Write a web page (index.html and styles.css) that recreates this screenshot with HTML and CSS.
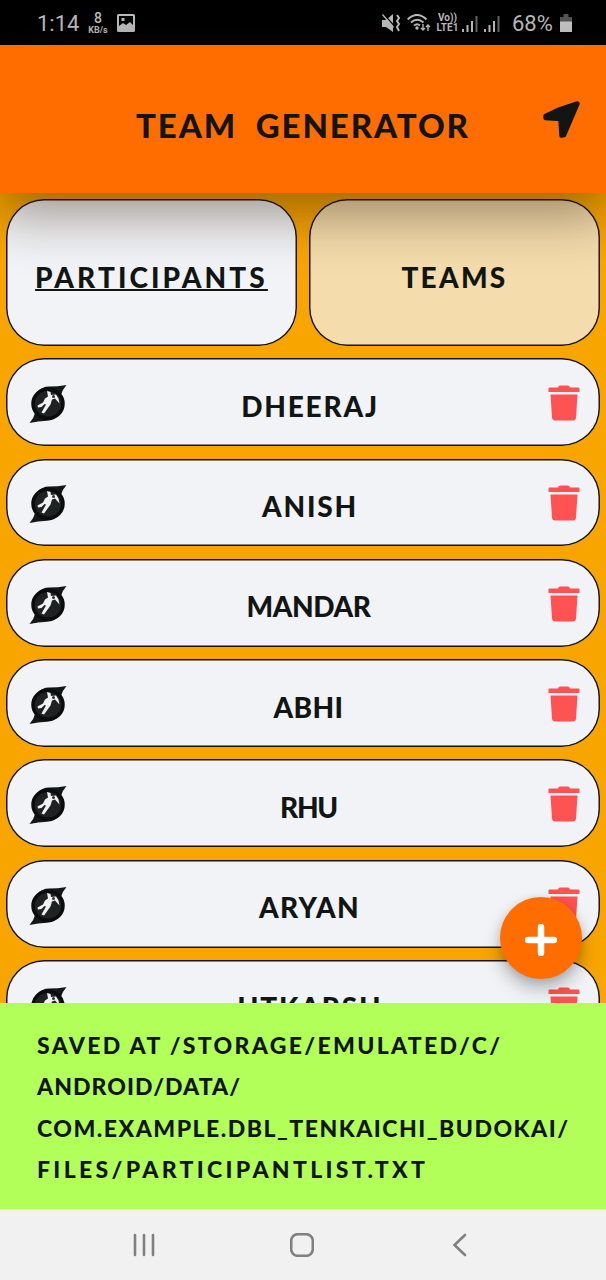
FILE: index.html
```html
<!DOCTYPE html>
<html lang="en">
<head>
<meta charset="utf-8">
<title>Team Generator</title>
<link rel="stylesheet" href="styles.css">
</head>
<body>
<svg class="defs" aria-hidden="true">
  <symbol id="badge" viewBox="0 0 38 40">
    <path d="M37.500 1Q33 6 32 11L20 19L8 8Q13 2.500 20 2.500Q29 2.500 37.500 1ZM.5 39Q5 34 6 29L18 20L30 31Q25 36.500 18 36.800Q9 37 .5 39Z" fill="#151617"/>
    <ellipse cx="19" cy="19.800" rx="15" ry="14.500" fill="#202123" stroke="#0c0c0d" stroke-width="3.500"/>
    <path d="M18 7l3.500 1 .5 3 5-.5 2.500 4 1 5-4.500-5-3 1-1.500 5-6.500 9-2.500-1 4.500-8-1.500-.5-3 3-3.500 .5-.5-2 5.500-3 2-4 3-2z" fill="#f2f2f2"/>
    <circle cx="24.500" cy="12.500" r="1.500" fill="#333"/>
  </symbol>
  <symbol id="trash" viewBox="0 0 32 36">
    <path d="M1.500 2.500H10Q10.500 .5 12 .5H20Q21.500 .5 22 2.500H30.500Q31.500 2.500 31.500 3.500V7H.5V3.500Q.5 2.500 1.500 2.500ZM2.500 9.500H29.500L28 32.500Q27.700 35.500 25 35.500H7Q4.300 35.500 4 32.500Z" fill="#ff5252"/>
  </symbol>
</svg>
<main class="phone">
  <div class="status">
    <span class="clock">1:14</span>
    <span class="speed"><b>8</b><small>KB/s</small></span>
    <svg class="photo" viewBox="0 0 18 18"><path fill="#bdbdbd" fill-rule="evenodd" d="M1.500 0h15q1.500 0 1.500 1.500v15q0 1.500-1.500 1.500h-15q-1.500 0-1.500-1.500v-15q0-1.500 1.500-1.500zM2 2v10l4-3 3 2 4-3 3 3V2zM4.500 4h3v3h-3z"/></svg>
    <svg class="mute" viewBox="0 0 19 18"><path fill="#bdbdbd" d="M0 6h4l7-6v18l-7-5H0z"/><path d="M1 -1l12 14" stroke="#000" stroke-width="1.200"/><path d="M.5 .5l11 13" stroke="#bdbdbd" stroke-width="1.300"/><path d="M15 1l2 3-2 3 2 3-2 3 2 4" fill="none" stroke="#bdbdbd" stroke-width="2"/></svg>
    <svg class="wifi" viewBox="0 0 24 18"><g fill="none" stroke="#bdbdbd" stroke-width="2"><path d="M.7 5.500Q10-3.500 19.500 5.500M4 8.500q6-5.500 12.500 0M7 11.500q3-2.500 6 0"/><path stroke-width="1.400" d="M16 10v6m-2-2l2 2 2-2M21 17v-6m-2 2l2-2 2 2"/></g><circle cx="10" cy="14" r="1.700" fill="#bdbdbd"/></svg>
    <span class="lte"><span>Vo))</span><span>LTE1</span></span>
    <svg class="bars" viewBox="0 0 16 17"><path fill="#bdbdbd" d="M0 14h2v3H0zM4.500 10h2v7h-2zM9 6h2v11H9z"/><path fill="#666" d="M13.500 1h2v16h-2z"/></svg>
    <svg class="bars second" viewBox="0 0 16 17"><path fill="#bdbdbd" d="M0 14h2v3H0zM4.500 10h2v7h-2zM9 6h2v11H9z"/><path fill="#666" d="M13.500 1h2v16h-2z"/></svg>
    <span class="percent">68%</span>
    <svg class="battery" viewBox="0 0 12 18"><path fill="#555" d="M3.500 0h5v3H12v5H0V3h3.500z"/><path fill="#c6c6c6" d="M0 7.500h12V18H0z"/></svg>
  </div>
  <header class="appbar">
    <h1>Team Generator</h1>
    <svg class="send" viewBox="0 0 38 38"><path d="M34.500 2.500L21 34L18.500 34.500L17.500 18L2.500 17L2.500 15L15 9Z" fill="#111614" stroke="#111614" stroke-width="4.500" stroke-linejoin="round"/></svg>
  </header>
  <section class="content">
    <nav class="tabs">
      <div class="tab active"><span>Participants</span></div>
      <div class="tab teams"><span>Teams</span></div>
    </nav>
    <ul class="list">
      <li><svg class="badge"><use href="#badge"/></svg><span class="wide">Dheeraj</span><svg class="trash"><use href="#trash"/></svg></li>
      <li><svg class="badge"><use href="#badge"/></svg><span class="wide">Anish</span><svg class="trash"><use href="#trash"/></svg></li>
      <li><svg class="badge"><use href="#badge"/></svg><span class="tight">Mandar</span><svg class="trash"><use href="#trash"/></svg></li>
      <li><svg class="badge"><use href="#badge"/></svg><span>Abhi</span><svg class="trash"><use href="#trash"/></svg></li>
      <li><svg class="badge"><use href="#badge"/></svg><span class="tighter">Rhu</span><svg class="trash"><use href="#trash"/></svg></li>
      <li><svg class="badge"><use href="#badge"/></svg><span class="medium">Aryan</span><svg class="trash"><use href="#trash"/></svg></li>
      <li><svg class="badge"><use href="#badge"/></svg><span class="wide">Utkarsh</span><svg class="trash"><use href="#trash"/></svg></li>
    </ul>
    <button class="fab" aria-label="Add"><svg viewBox="0 0 32 32"><path d="M16 3v26M3 16h26" stroke="#fff" stroke-width="6.500" stroke-linecap="round"/></svg></button>
  </section>
  <div class="toast">
    <span class="l1">Saved at /storage/emulated/c/</span>
    <span class="l2">Android/data/</span>
    <span class="l3">com.example.dbl_tenkaichi_budokai/</span>
    <span class="l4">files/participantlist.txt</span>
  </div>
  <footer class="navbar">
    <svg viewBox="0 0 24 24"><path d="M3 2v20M12 2v20M21 2v20"/></svg>
    <svg viewBox="0 0 24 24"><rect x="1.200" y="1.200" width="21.600" height="21.600" rx="6.500"/></svg>
    <svg viewBox="0 0 24 24"><path d="M17 2L6.500 12L17 22"/></svg>
  </footer>
</main>
</body>
</html>
```
FILE: styles.css
```css
* { box-sizing: border-box; }
body { margin: 0; background: #f9a500; color: #111614; font-family: Lato, "Liberation Sans", sans-serif; }
.defs { position: absolute; width: 0; height: 0; }
.phone { width: 606px; height: 1280px; display: flex; flex-direction: column; overflow: hidden; }
.status { height: 45px; flex: none; background: #000; color: #bdbdbd; display: flex; align-items: center; padding: 1px 34px 0 37px; font-family: Roboto, sans-serif; font-size: 22px; }
.status svg { flex: none; }
.clock { width: 50px; }
.speed { width: 22px; display: flex; flex-direction: column; align-items: center; gap: 1px; }
.speed b { font-size: 14px; font-weight: 500; line-height: 13px; }
.speed small { font-size: 9px; font-weight: 700; line-height: 9px; }
.photo { width: 18px; height: 18px; margin-left: 8px; }
.mute { width: 19px; height: 18px; margin-left: auto; }
.wifi { width: 24px; height: 18px; margin-left: 6px; }
.lte { width: 23px; margin-left: 5px; display: flex; flex-direction: column; font-size: 10px; font-weight: 700; line-height: 10px; align-items: center; }
.bars { width: 16px; height: 17px; margin-left: 3px; }
.bars.second { margin-left: 6px; }
.percent { margin-left: 12px; width: 41px; }
.battery { width: 12px; height: 18px; margin-left: 7px; }
.appbar { height: 148px; flex: none; z-index: 1; position: relative; background: #ff6d00; display: grid; grid-template-columns: 1fr 38px; align-items: center; padding: 12px 25px 0 136px; box-shadow: 0 18px 50px 4px rgba(40, 20, 0, .42); }
h1 { margin: 0; font-size: 33px; font-weight: 900; text-transform: uppercase; white-space: nowrap; letter-spacing: 1.900px; word-spacing: 9px; }
.send { width: 38px; height: 38px; margin-top: -11px; }
.content { flex: 1; min-height: 0; position: relative; overflow: hidden; padding: 6px 6px 0; }
.tabs { display: grid; grid-template-columns: 1fr 1fr; gap: 12px; height: 147px; }
.tab { display: flex; align-items: center; justify-content: center; background: #f4dcac; border-radius: 38px; box-shadow: inset 0 0 0 1.500px #1a1208; font-size: 28px; font-weight: 900; text-transform: uppercase; padding-top: 8px; }
.tab.active { background: #f1f3f6; letter-spacing: 3.100px; }
.teams { letter-spacing: 2.300px; }
.active span { text-decoration: underline 2px; text-underline-offset: 1px; text-decoration-skip-ink: none; }
.list { margin: 12.300px 0 0; padding: 0; list-style: none; display: flex; flex-direction: column; gap: 12.500px; }
.list li { height: 87.800px; flex: none; background: #f1f3f6; border-radius: 38px; box-shadow: inset 0 0 0 1.500px #1a1208; display: grid; grid-template-columns: 38px 1fr 32px; align-items: center; padding: 2px 20px 0 23px; }
.list span { text-align: center; font-size: 28px; font-weight: 900; text-transform: uppercase; padding: 5px 0 0 2px; letter-spacing: .4px; }
.list .wide { letter-spacing: 1.800px; padding-left: 5px; }
.list .medium { letter-spacing: 1.300px; padding-left: 4px; }
.list .tight { letter-spacing: -.4px; }
.list .tighter { letter-spacing: -1.300px; }
.badge { width: 38px; height: 40px; margin-top: 2px; }
.trash { width: 32px; height: 36px; }
.fab { position: absolute; right: 24px; bottom: 24px; width: 82px; height: 82px; border: 0; border-radius: 50%; background: #ff6d00; display: grid; place-items: center; box-shadow: 0 10px 18px rgba(0, 0, 0, .25), 0 2px 8px rgba(0, 0, 0, .12); padding: 4px 0 0; }
.fab svg { width: 32px; height: 32px; }
.toast { height: 206px; flex: none; background: #b2ff59; padding: 22px 37px 0; font-size: 23px; font-weight: 900; text-transform: uppercase; line-height: 41.400px; white-space: nowrap; }
.toast span { display: block; }
.l1 { letter-spacing: 2.320px; }
.l2 { letter-spacing: 1.050px; }
.l3 { letter-spacing: 1.500px; }
.l4 { letter-spacing: 3.320px; }
.navbar { height: 71px; flex: none; background: #f1f1f1; display: flex; justify-content: space-between; align-items: center; padding: 0 134px 0 132px; }
.navbar svg { width: 24px; height: 24px; fill: none; stroke: #808080; stroke-width: 2.600; stroke-linecap: round; }
```
